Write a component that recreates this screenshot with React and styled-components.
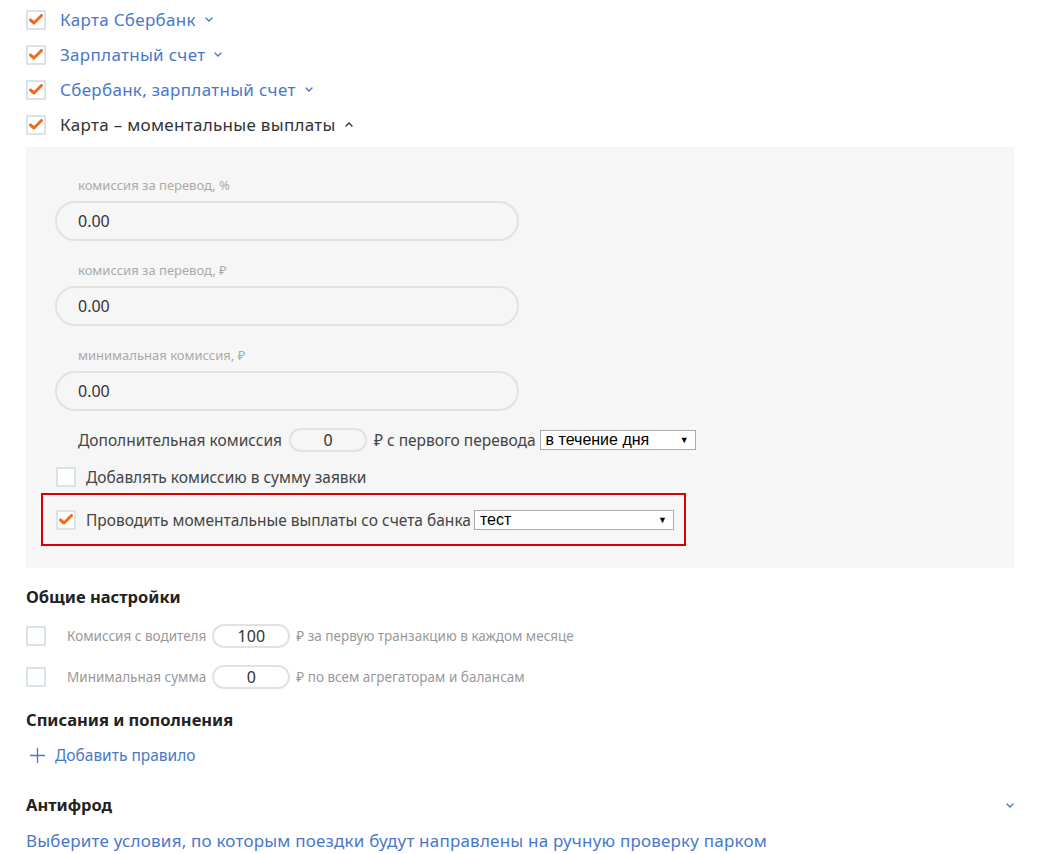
import styled, { createGlobalStyle } from "styled-components"

const Global = createGlobalStyle`
    body {
        margin: 0;
        background: #fff;
        font-family: "Noto Sans", "Open Sans", sans-serif;
        color: #333;
    }
`;

const Page = styled.div`
    width: 1044px;
    padding: 2px 30px 0 26px;
    box-sizing: border-box;
`;

const MethodRow = styled.div`
    display: flex;
    align-items: center;
    height: 35px;
    gap: 14px;
`;

const Box = styled.span`
    width: 20px;
    height: 20px;
    box-sizing: border-box;
    border: 2px solid #d9e3ea;
    background: #fff;
    display: flex;
    align-items: center;
    justify-content: center;
    flex-shrink: 0;
    margin-right: ${p => p.$gapRight || 0}px;
`;

const MethodName = styled.span`
    font-size: 17px;
    letter-spacing: 0.3px;
    color: ${p => (p.$open ? "#333" : "#4a78c8")};
    display: flex;
    align-items: center;
    gap: 9px;
`;

const Panel = styled.div`
    background: #f6f6f6;
    padding: 30px 0 22px 29px;
    margin-top: 5px;
    width: 988px;
    box-sizing: border-box;
`;

const Field = styled.div`
    display: flex;
    flex-direction: column;
    gap: 7px;
    margin-bottom: 21px;
`;

const FieldLabel = styled.label`
    font-size: 13px;
    line-height: 17px;
    color: #aaa;
    padding-left: 23px;
`;

const RoundInput = styled.input`
    width: 464px;
    height: 40px;
    box-sizing: border-box;
    border: 2px solid #e2e2e2;
    border-radius: 20px;
    background: transparent;
    padding: 0 21px;
    font-family: inherit;
    font-size: 16px;
    color: #333;
    outline: none;
`;

const InlineRow = styled.div`
    display: flex;
    align-items: center;
    gap: ${p => p.$gap || 4}px;
    height: 24px;
    font-size: ${p => p.$size || 15.5}px;
    color: ${p => p.$color || "#444"};
    margin: ${p => p.$margin || 0};
    padding-left: ${p => p.$indent || 0}px;
    white-space: nowrap;
`;

const SmallInput = styled.input`
    width: 78px;
    height: 24px;
    box-sizing: border-box;
    border: 2px solid #e2e2e2;
    border-radius: 12px;
    background: ${p => (p.$white ? "#fff" : "transparent")};
    text-align: center;
    font-family: inherit;
    font-size: 16px;
    color: #333;
    outline: none;
    padding: 0;
    margin: 0 ${p => p.$space || 3}px;
`;

const Select = styled.div`
    width: ${p => p.$width}px;
    height: 20px;
    box-sizing: border-box;
    border: 1px solid #a9a9a9;
    background: #fff;
    display: flex;
    align-items: center;
    justify-content: space-between;
    padding: 0 6px 0 5px;
    margin-left: ${p => p.$shift || 0}px;
    font-family: "Liberation Sans", Arial, sans-serif;
    font-size: 16px;
    color: #000;
    &::after {
        content: "▼";
        font-size: 9px;
    }
`;

const Highlight = styled.div`
    border: 2px solid #d90000;
    margin: 4px 0 0 -14px;
    width: 645px;
    box-sizing: border-box;
    height: 53px;
    display: flex;
    align-items: center;
    padding-left: 13px;
`;

const Heading = styled.h3`
    margin: ${p => p.$top || 0}px 0 0;
    font-size: 16.5px;
    font-weight: 700;
    color: #222;
    line-height: 22px;
`;

const AddLink = styled.div`
    display: flex;
    align-items: center;
    gap: 10px;
    font-size: 15.5px;
    color: #4a78c8;
    padding-left: 4px;
    margin-top: 13px;
`;

const HeadRow = styled.div`
    display: flex;
    justify-content: space-between;
    align-items: center;
    margin-top: 28px;
`;

const Hint = styled.div`
    font-size: 17px;
    letter-spacing: 0.2px;
    color: #4a78c8;
    margin-top: 13px;
`;

const Check = () => (
    <svg width="14" height="11" viewBox="0 0 14 11">
        <path d="M1.5 6 L5 9 L12.5 1.5" fill="none" stroke="#f26a1b" strokeWidth="3" strokeLinecap="round" strokeLinejoin="round" />
    </svg>
)

const Chevron = ({ up, color }) => (
    <svg width="8" height="5" viewBox="0 0 8 5">
        <path d={up ? "M1 4 L4 1 L7 4" : "M1 1 L4 4 L7 1"} fill="none" stroke={color} strokeWidth="1.4" strokeLinecap="round" />
    </svg>
)

const CheckBox = ({ on, gapRight }) => <Box $gapRight={gapRight}>{on && <Check />}</Box>

const methods = ["Карта Сбербанк", "Зарплатный счет", "Сбербанк, зарплатный счет"];

const fields = ["комиссия за перевод, %", "комиссия за перевод, ₽", "минимальная комиссия, ₽"];

const App = () => {
    return (
        <Page>
            <Global />
            {methods.map(m => (
                <MethodRow key={m}>
                    <CheckBox on />
                    <MethodName>{m}<Chevron color="#4a78c8" /></MethodName>
                </MethodRow>
            ))}
            <MethodRow>
                <CheckBox on />
                <MethodName $open>Карта – моментальные выплаты<Chevron up color="#333" /></MethodName>
            </MethodRow>
            <Panel>
                {fields.map(f => (
                    <Field key={f}>
                        <FieldLabel>{f}</FieldLabel>
                        <RoundInput readOnly value="0.00" />
                    </Field>
                ))}
                <InlineRow $indent={23} $margin="-4px 0 0">
                    Дополнительная комиссия
                    <SmallInput readOnly value="0" />
                    ₽ с первого перевода
                    <Select $width={156}>в течение дня</Select>
                </InlineRow>
                <InlineRow $gap={10} $margin="13px 0 0 1px">
                    <CheckBox />
                    Добавлять комиссию в сумму заявки
                </InlineRow>
                <Highlight>
                    <InlineRow $gap={10}>
                        <CheckBox on />
                        Проводить моментальные выплаты со счета банка
                        <Select $width={200} $shift={-7}>тест</Select>
                    </InlineRow>
                </Highlight>
            </Panel>
            <Heading $top={18}>Общие настройки</Heading>
            <InlineRow $size={13.5} $color="#999" $margin="16px 0 0">
                <CheckBox gapRight={17} />
                Комиссия с водителя
                <SmallInput $white $space={2} readOnly value="100" />
                ₽ за первую транзакцию в каждом месяце
            </InlineRow>
            <InlineRow $size={13.5} $color="#999" $margin="17px 0 0">
                <CheckBox gapRight={17} />
                Минимальная сумма
                <SmallInput $white $space={2} readOnly value="0" />
                ₽ по всем агрегаторам и балансам
            </InlineRow>
            <Heading $top={20}>Списания и пополнения</Heading>
            <AddLink>
                <svg width="15" height="15" viewBox="0 0 15 15">
                    <path d="M7.5 0 V15 M0 7.5 H15" stroke="#4a78c8" strokeWidth="1.3" />
                </svg>
                Добавить правило
            </AddLink>
            <HeadRow>
                <Heading>Антифрод</Heading>
                <Chevron color="#4a78c8" />
            </HeadRow>
            <Hint>Выберите условия, по которым поездки будут направлены на ручную проверку парком</Hint>
        </Page>
    )
}

export default App
